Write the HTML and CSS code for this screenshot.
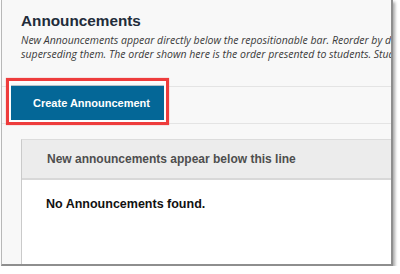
FILE: index.html
```html
<!DOCTYPE html>
<html>
<head>
<meta charset="utf-8">
<link rel="stylesheet" href="styles.css">
</head>
<body>
<div class="frame">
  <h1 class="title">Announcements</h1>
  <p class="desc">New Announcements appear directly below the repositionable bar. Reorder by dragging and dropping announcements above the bar,<br>superseding them. The order shown here is the order presented to students. Students see announcements in this order.</p>
  <div class="toolbar">
    <button class="create">Create Announcement</button>
  </div>
  <div class="list">
    <div class="list-head">New announcements appear below this line</div>
    <div class="list-body">No Announcements found.</div>
  </div>
</div>
</body>
</html>
```
FILE: styles.css
```css
html, body {
  margin: 0;
  padding: 0;
  background: #ffffff;
}
.frame {
  margin-left: 1px;
  width: 389px;
  height: 264px;
  border-left: 1px solid #b8b8b8;
  border-right: 2px solid #8e8e8e;
  border-bottom: 2px solid #8e8e8e;
  box-shadow: 2px 2px 3px rgba(0, 0, 0, 0.35);
  background: #f8f8f8;
  overflow: hidden;
  display: flex;
  flex-direction: column;
}
.title {
  margin: 12px 0 0 19px;
  font-family: "Liberation Sans", Arial, sans-serif;
  font-weight: bold;
  font-size: 15.3px;
  line-height: 18px;
  color: #222c3a;
}
.desc {
  margin: 4px 0 0 19px;
  font-family: "Open Sans", sans-serif;
  font-style: italic;
  font-size: 10.5px;
  line-height: 13.5px;
  color: #3a3a3a;
  white-space: nowrap;
}
.toolbar {
  margin-top: 25px;
  height: 36px;
  border-top: 1px solid #e4e4e4;
  border-bottom: 1px solid #e4e4e4;
  flex: none;
}
.create {
  position: relative;
  margin: -2px 0 0 7px;
  width: 156px;
  height: 36px;
  border: 1px solid #b7c2c8;
  background: #046797;
  color: #ffffff;
  font-family: "Liberation Sans", Arial, sans-serif;
  font-weight: bold;
  font-size: 11px;
  padding: 0 0 0 9px;
  display: block;
}
.create::after {
  content: "";
  position: absolute;
  left: -4px;
  right: -5px;
  top: -8px;
  bottom: -5px;
  border: 3px solid #ee3c3c;
  box-shadow: 0 0 1px rgba(238, 60, 60, 0.6), inset 0 0 0 2px #fdfdfd;
}
.list {
  margin: 15px 0 0 19px;
  flex: 1;
  border-left: 1px solid #cacaca;
  border-top: 1px solid #dcdcdc;
  background: #ffffff;
  font-family: "Liberation Sans", Arial, sans-serif;
  font-weight: bold;
}
.list-head {
  height: 38px;
  line-height: 38px;
  padding-left: 25px;
  background: #ececec;
  border-bottom: 2px solid #d8d8d8;
  font-size: 12px;
  color: #4e4e4e;
}
.list-body {
  padding: 16px 0 0 24px;
  font-size: 12.5px;
  line-height: 16px;
  color: #111111;
}
```
